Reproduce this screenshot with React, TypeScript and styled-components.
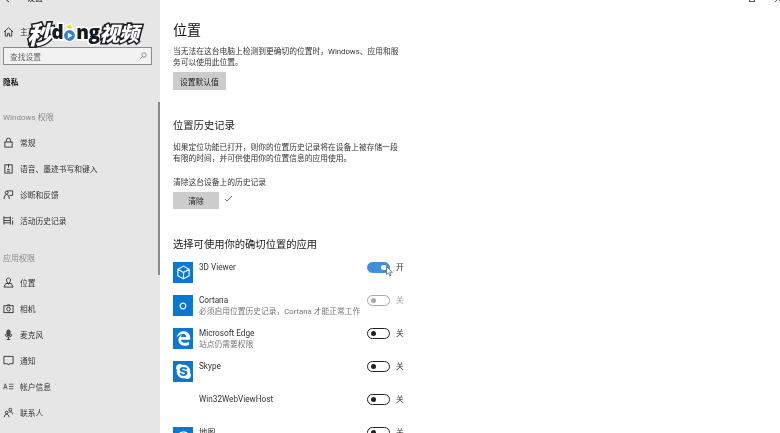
import React from "react";
import styled, { createGlobalStyle } from "styled-components";
import { FaEdgeLegacy, FaSkype } from "react-icons/fa";

const Global = createGlobalStyle`
  html, body { margin: 0; padding: 0; background: #fff; }
  #root { width: 780px; height: 433px; overflow: hidden; }
  * { box-sizing: border-box; }
`;

const FONT = `Roboto, "Noto Sans CJK SC", sans-serif`;

const Page = styled.div`
  position: relative;
  display: flex;
  width: 780px;
  height: 433px;
  overflow: hidden;
  background: #fff;
  color: #222;
  font-family: ${FONT};
  filter: blur(0.3px);
`;

const Sidebar = styled.aside`
  position: relative;
  flex: 0 0 160px;
  height: 433px;
  overflow: hidden;
  background: #e6e6e6;
`;

const ScrollThumb = styled.div`
  position: absolute;
  left: 158px;
  top: 102px;
  width: 1.5px;
  height: 173px;
  background: #8a8a8a;
`;

const TitleRow = styled.div`
  display: flex;
  align-items: center;
  gap: 15px;
  height: 8px;
  margin-top: -5px;
  padding-left: 5px;
  font-size: 8px;
  line-height: 8px;
`;

const NavRow = styled.div<{ $mt?: number }>`
  display: flex;
  align-items: center;
  gap: 6px;
  height: 26px;
  margin-top: ${(p) => p.$mt ?? 0}px;
  padding-left: 3px;
  font-size: 7.75px;
  color: #333;
  svg { flex: 0 0 11px; width: 11px; height: 11px; }
`;

const SearchBox = styled.div`
  display: flex;
  align-items: center;
  justify-content: space-between;
  width: 149px;
  height: 18px;
  margin: 3px 0 0 3px;
  padding: 0 4px 0 6px;
  background: #f2f2f2;
  border: 1px solid #8b8b8b;
  font-size: 7.75px;
  color: #666;
`;

const SectionTitle = styled.div`
  height: 18px;
  margin-top: 9px;
  padding-left: 3px;
  font-size: 7.75px;
  line-height: 18px;
  font-weight: 700;
  color: #111;
`;

const GroupLabel = styled.div<{ $mt: number; $h: number }>`
  height: ${(p) => p.$h}px;
  margin-top: ${(p) => p.$mt}px;
  padding-left: 3px;
  font-size: 8px;
  line-height: 29px;
  color: #8a8a8a;
`;

const Main = styled.main`
  position: relative;
  flex: 1;
  height: 433px;
  overflow: hidden;
  padding: 20px 0 0 13px;
`;

const WindowControls = styled.div`
  position: absolute;
  top: -4px;
  right: -1px;
  display: flex;
  gap: 20px;
  svg { width: 6px; height: 6px; }
`;

const H1 = styled.h1`
  margin: 0;
  font-size: 14px;
  line-height: 20px;
  font-weight: 400;
  color: #111;
`;

const H2 = styled.h2`
  margin: 29px 0 0;
  font-size: 10.3px;
  line-height: 14px;
  font-weight: 400;
  color: #1a1a1a;
`;

const Para = styled.p<{ $mt: number }>`
  width: 232px;
  margin: ${(p) => p.$mt}px 0 0;
  font-size: 7.75px;
  line-height: 11px;
  color: #333;
`;

const GrayButton = styled.div<{ $w: number; $h: number }>`
  display: flex;
  align-items: center;
  justify-content: center;
  width: ${(p) => p.$w}px;
  height: ${(p) => p.$h}px;
  background: #cccccc;
  font-size: 7.75px;
  color: #222;
`;

const ButtonSlot = styled.div`
  margin-top: 4px;
`;

const ClearRow = styled.div`
  display: flex;
  align-items: flex-start;
  gap: 5px;
  margin-top: 4px;
  svg { width: 9px; height: 9px; margin-top: 2px; }
`;

const AppList = styled.div`
  margin-top: 10px;
`;

const AppRow = styled.div`
  display: flex;
  align-items: flex-start;
  height: 33px;
`;

const AppIcon = styled.div<{ $blank?: boolean }>`
  flex: 0 0 20px;
  width: 20px;
  height: 21px;
  display: flex;
  align-items: center;
  justify-content: center;
  background: ${(p) => (p.$blank ? "transparent" : "#0a78d2")};
  color: #fff;
`;

const AppText = styled.div`
  flex: 0 0 168px;
  margin-left: 6px;
  margin-top: 0;
`;

const AppName = styled.div`
  font-size: 8.2px;
  line-height: 11px;
  color: #333;
`;

const AppSub = styled.div`
  font-size: 7.75px;
  line-height: 11px;
  color: #777;
`;

const ToggleGroup = styled.div`
  position: relative;
  display: flex;
  align-items: center;
  gap: 6px;
  height: 11px;
`;

const Track = styled.div<{ $state: "on" | "off" | "disabled" }>`
  display: flex;
  align-items: center;
  justify-content: ${(p) => (p.$state === "on" ? "flex-end" : "flex-start")};
  width: 23px;
  height: 11px;
  padding: 0 2.5px;
  border-radius: 6px;
  border: 1.2px solid
    ${(p) => (p.$state === "on" ? "#3f8fdc" : p.$state === "off" ? "#222" : "#a8a8a8")};
  background: ${(p) => (p.$state === "on" ? "#3f8fdc" : "transparent")};
`;

const Knob = styled.div<{ $state: "on" | "off" | "disabled" }>`
  width: 5.5px;
  height: 5.5px;
  border-radius: 50%;
  background: ${(p) => (p.$state === "on" ? "#fff" : p.$state === "off" ? "#222" : "#a8a8a8")};
`;

const ToggleLabel = styled.span<{ $muted?: boolean }>`
  font-size: 7.75px;
  line-height: 11px;
  color: ${(p) => (p.$muted ? "#a0a0a0" : "#333")};
`;

const Pointer = styled.svg`
  position: absolute;
  left: 19px;
  top: 4px;
  width: 7px;
  height: 11px;
`;

const Logo = styled.div`
  position: absolute;
  left: 27px;
  top: 17px;
  display: flex;
  align-items: center;
  height: 32px;
  font-family: "Noto Sans CJK SC", "Open Sans", sans-serif;
  font-weight: 900;
  font-style: italic;
  filter: drop-shadow(0 0 0.7px #fff) drop-shadow(0 0 0.5px #fff);
`;

const LogoHan = styled.span<{ $size: number }>`
  font-size: ${(p) => p.$size}px;
  line-height: 32px;
  letter-spacing: -0.5px;
  color: #fff;
  -webkit-text-stroke: 3.2px #1d1d24;
  paint-order: stroke fill;
`;

const LogoLatin = styled.span`
  font-family: "Open Sans", sans-serif;
  font-style: normal;
  font-weight: 800;
  font-size: 19px;
  line-height: 32px;
  letter-spacing: -0.5px;
  margin: -3px 0 0;
  color: #141c24;
  -webkit-text-stroke: 2.6px #fff;
  paint-order: stroke fill;
`;

const PlayBadge = styled.svg`
  width: 13px;
  height: 22px;
  margin: 0;
`;

const st = { fill: "none", stroke: "#333", strokeWidth: 1 } as const;

const LockI = () => (
  <svg viewBox="0 0 12 12" {...st}><rect x="2" y="5.5" width="8" height="5.5" /><path d="M3.8 5.5V3.4a2.2 2.2 0 0 1 4.4 0v2.1" /></svg>
);
const SpeechI = () => (
  <svg viewBox="0 0 12 12" {...st}><rect x="2" y="2" width="8" height="9" /><path d="M6 1v4M4.5 7h3M4.5 9h3" /></svg>
);
const DiagI = () => (
  <svg viewBox="0 0 12 12" {...st}><path d="M4.5 2h6v5H7M1 11l1-4 2-1 2 1 1 4" /><circle cx="4" cy="4" r="1.6" /></svg>
);
const ActivityI = () => (
  <svg viewBox="0 0 12 12" {...st}><path d="M1 1.5v9M8 1.5v9M1 3h7M1 8.500h7M1 6h7M10.500 3v1M10.500 6v4.500" /></svg>
);
const PinI = () => (
  <svg viewBox="0 0 12 12" {...st}><path d="M1 11h10L9 7H3zM6 8 4 4.500a2.300 2.300 0 1 1 4 0z" /></svg>
);
const CameraI = () => (
  <svg viewBox="0 0 12 12" {...st}><rect x="1" y="3" width="10" height="7.500" /><circle cx="6" cy="6.700" r="2" /><path d="M4 3l.8-1h2.400L8 3" /></svg>
);
const MicI = () => (
  <svg viewBox="0 0 12 12" {...st}><rect x="4.300" y="1" width="3.400" height="6.500" rx="1.700" fill="#555" /><path d="M2.500 5.500a3.500 3.500 0 0 0 7 0M6 9v2.500M4 11.500h4" /></svg>
);
const NotifyI = () => (
  <svg viewBox="0 0 12 12" {...st}><path d="M1 1.500h10v8H7L6 11 5 9.500H1z" /></svg>
);
const AccountI = () => (
  <svg viewBox="0 0 12 12" {...st} strokeWidth={0.8}><path d="M.5 9 2.500 3l2 6M1.200 7h2.600M6.500 3.500h5M6.500 6h5M6.500 8.500h5" /></svg>
);
const ContactI = () => (
  <svg viewBox="0 0 12 12" {...st}><circle cx="8" cy="3" r="1.600" /><circle cx="4" cy="6" r="1.400" /><path d="M1.500 11c0-2 1-3 2.500-3s2.500 1 2.500 3M6.500 6c.5-.6 1-.8 1.500-.8 1.500 0 2.500 1 2.500 2.800" /></svg>
);

const nav1 = [
  { icon: <LockI />, text: "常规" },
  { icon: <SpeechI />, text: "语音、墨迹书写和键入" },
  { icon: <DiagI />, text: "诊断和反馈" },
  { icon: <ActivityI />, text: "活动历史记录" },
];
const nav2 = [
  { icon: <PinI />, text: "位置" },
  { icon: <CameraI />, text: "相机" },
  { icon: <MicI />, text: "麦克风" },
  { icon: <NotifyI />, text: "通知" },
  { icon: <AccountI />, text: "帐户信息" },
  { icon: <ContactI />, text: "联系人" },
];

const Cube = () => (
  <svg width="15" height="15" viewBox="0 0 16 16" fill="none" stroke="#fff" strokeWidth="1.200" strokeLinejoin="round">
    <path d="M8 1.200 14 4.500v7L8 14.800 2 11.500v-7zM2 4.500 8 8l6-3.500M8 8v6.800" />
  </svg>
);
const CortanaI = () => (
  <svg width="8" height="8" viewBox="0 0 8 8" fill="none" stroke="#fff" strokeWidth="1.200"><circle cx="4" cy="4" r="2.800" /></svg>
);
const MapI = () => (
  <svg width="15" height="15" viewBox="0 0 16 16" fill="none" stroke="#fff" strokeWidth="1.500"><circle cx="8" cy="8" r="6" /><circle cx="8" cy="8" r="2" /></svg>
);

type App = { icon: React.ReactNode; name: string; sub?: string; state: "on" | "off" | "disabled"; blank?: boolean };
const apps: App[] = [
  { icon: <Cube />, name: "3D Viewer", state: "on" },
  { icon: <CortanaI />, name: "Cortana", sub: "必须启用位置历史记录，Cortana 才能正常工作", state: "disabled" },
  { icon: <FaEdgeLegacy size={15} />, name: "Microsoft Edge", sub: "站点仍需要权限", state: "off" },
  { icon: <FaSkype size={17} />, name: "Skype", state: "off" },
  { icon: null, name: "Win32WebViewHost", state: "off", blank: true },
  { icon: <MapI />, name: "地图", state: "off" },
];

export default function App() {
  return (
    <>
      <Global />
      <Page>
        <Sidebar>
          <TitleRow>
            <svg width="7" height="7" viewBox="0 0 7 7" fill="none" stroke="#333"><path d="M4 1 1 3.500 4 6M1 3.500h6" /></svg>
            <span>设置</span>
          </TitleRow>
          <NavRow $mt={15}>
            <svg viewBox="0 0 12 12" {...st}><path d="M1 6.500 6 2l5 4.500M2.500 5.500V11h2.500V8h2v3h2.500V5.500" /></svg>
            <span>主页</span>
          </NavRow>
          <SearchBox>
            <span>查找设置</span>
            <svg width="8" height="8" viewBox="0 0 8 8" fill="none" stroke="#777" strokeWidth="0.800"><circle cx="5" cy="3" r="2.200" /><path d="M3.400 4.600 1 7" /></svg>
          </SearchBox>
          <SectionTitle>隐私</SectionTitle>
          <GroupLabel $mt={11} $h={26}>Windows 权限</GroupLabel>
          {nav1.map((n) => (
            <NavRow key={n.text}>{n.icon}<span>{n.text}</span></NavRow>
          ))}
          <GroupLabel $mt={11} $h={25}>应用权限</GroupLabel>
          {nav2.map((n) => (
            <NavRow key={n.text}>{n.icon}<span>{n.text}</span></NavRow>
          ))}
          <ScrollThumb />
        </Sidebar>
        <Main>
          <WindowControls>
            <svg viewBox="0 0 6 6" fill="none" stroke="#555"><rect x="0.500" y="0.500" width="5" height="5" /></svg>
            <svg viewBox="0 0 6 6" fill="none" stroke="#555"><path d="M0 0l6 6M6 0 0 6" /></svg>
          </WindowControls>
          <H1>位置</H1>
          <Para $mt={6}>当无法在这台电脑上检测到更确切的位置时，Windows、应用和服务可以使用此位置。</Para>
          <ButtonSlot><GrayButton $w={53} $h={18}>设置默认值</GrayButton></ButtonSlot>
          <H2>位置历史记录</H2>
          <Para $mt={9}>如果定位功能已打开，则你的位置历史记录将在设备上被存储一段有限的时间，并可供使用你的位置信息的应用使用。</Para>
          <Para $mt={13}>清除这台设备上的历史记录</Para>
          <ClearRow>
            <GrayButton $w={46} $h={17}>清除</GrayButton>
            <svg viewBox="0 0 9 9" fill="none" stroke="#333" strokeWidth="0.700"><path d="M1 5l2 2 5-5" /></svg>
          </ClearRow>
          <H2>选择可使用你的确切位置的应用</H2>
          <AppList>
            {apps.map((a) => (
              <AppRow key={a.name}>
                <AppIcon $blank={a.blank}>{a.icon}</AppIcon>
                <AppText>
                  <AppName>{a.name}</AppName>
                  {a.sub && <AppSub>{a.sub}</AppSub>}
                </AppText>
                <ToggleGroup>
                  <Track $state={a.state}><Knob $state={a.state} /></Track>
                  <ToggleLabel $muted={a.state === "disabled"}>{a.state === "on" ? "开" : "关"}</ToggleLabel>
                  {a.state === "on" && (
                    <Pointer viewBox="0 0 7 11"><path d="M.5.500v8l2-1.700 1.300 3 1.300-.6-1.300-2.900H6.500z" fill="#fff" stroke="#333" strokeWidth="0.600" /></Pointer>
                  )}
                </ToggleGroup>
              </AppRow>
            ))}
          </AppList>
        </Main>
        <Logo>
          <LogoHan $size={25}>秒</LogoHan>
          <LogoLatin>d</LogoLatin>
          <PlayBadge viewBox="0 0 13 22">
            <path d="M4 6 2.500 2.500 5.500 3.500 8 1.500l.5 3L11 6 7 7z" fill="#f5d33c" stroke="#fff" strokeWidth="0.600" />
            <circle cx="6.500" cy="13.500" r="6" fill="#2f7fe0" stroke="#fff" strokeWidth="1.200" />
            <path d="M4.800 10.500v6l4.700-3z" fill="#fff" stroke="none" />
          </PlayBadge>
          <LogoLatin>ng</LogoLatin>
          <LogoHan $size={20}>视频</LogoHan>
        </Logo>
      </Page>
    </>
  );
}
